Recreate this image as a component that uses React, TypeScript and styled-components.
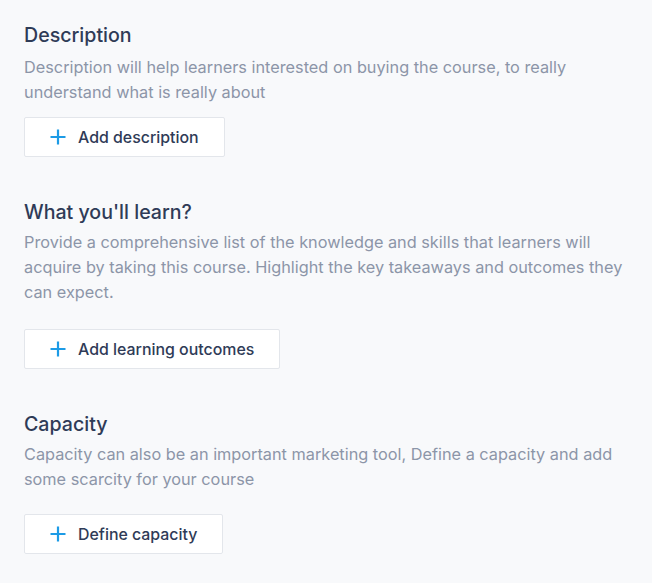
import styled, { createGlobalStyle } from "styled-components";

const GlobalStyle = createGlobalStyle`
  html, body {
    margin: 0;
    padding: 0;
    background: #f8f9fb;
  }
  body {
    font-family: Inter, "Noto Sans", sans-serif;
    -webkit-font-smoothing: antialiased;
  }
`;

const Page = styled.div`
  padding: 23px 16px 0 24px;
  display: flex;
  flex-direction: column;
  gap: 43px;
`;

const Section = styled.section`
  display: flex;
  flex-direction: column;
  align-items: flex-start;
`;

const Title = styled.h2<{ $gap: number }>`
  margin: 0 0 ${(p) => p.$gap}px 0;
  font-size: 19.6px;
  line-height: 24px;
  font-weight: 500;
  color: #2f3b57;
`;

const Text = styled.p<{ $gap: number }>`
  margin: 0 0 ${(p) => p.$gap}px 0;
  font-size: 16.3px;
  line-height: 25px;
  color: #8c95a8;
`;

const AddButton = styled.button`
  display: flex;
  align-items: center;
  gap: 12px;
  height: 40px;
  padding: 0 25px;
  background: #ffffff;
  border: 1px solid #e3e6eb;
  border-radius: 2px;
  font-family: inherit;
  font-size: 15.9px;
  font-weight: 500;
  color: #2f3b57;
  cursor: pointer;
`;

const PlusIcon = () => (
  <svg width="16" height="16" viewBox="0 0 16 16" aria-hidden="true">
    <path d="M8 0.5v15M0.5 8h15" stroke="#1c9be6" strokeWidth="2.2" />
  </svg>
);

interface BlockProps {
  title: string;
  text: string;
  action: string;
  titleGap: number;
  textGap: number;
}

const Block = ({ title, text, action, titleGap, textGap }: BlockProps) => (
  <Section>
    <Title $gap={titleGap}>{title}</Title>
    <Text $gap={textGap}>{text}</Text>
    <AddButton>
      <PlusIcon />
      {action}
    </AddButton>
  </Section>
);

const App = () => (
  <>
    <GlobalStyle />
    <Page>
      <Block
        title="Description"
        text="Description will help learners interested on buying the course, to really understand what is really about"
        action="Add description"
        titleGap={8}
        textGap={12}
      />
      <Block
        title="What you'll learn?"
        text="Provide a comprehensive list of the knowledge and skills that learners will acquire by taking this course. Highlight the key takeaways and outcomes they can expect."
        action="Add learning outcomes"
        titleGap={6}
        textGap={24}
      />
      <Block
        title="Capacity"
        text="Capacity can also be an important marketing tool, Define a capacity and add some scarcity for your course"
        action="Define capacity"
        titleGap={6}
        textGap={22}
      />
    </Page>
  </>
);

export default App;
